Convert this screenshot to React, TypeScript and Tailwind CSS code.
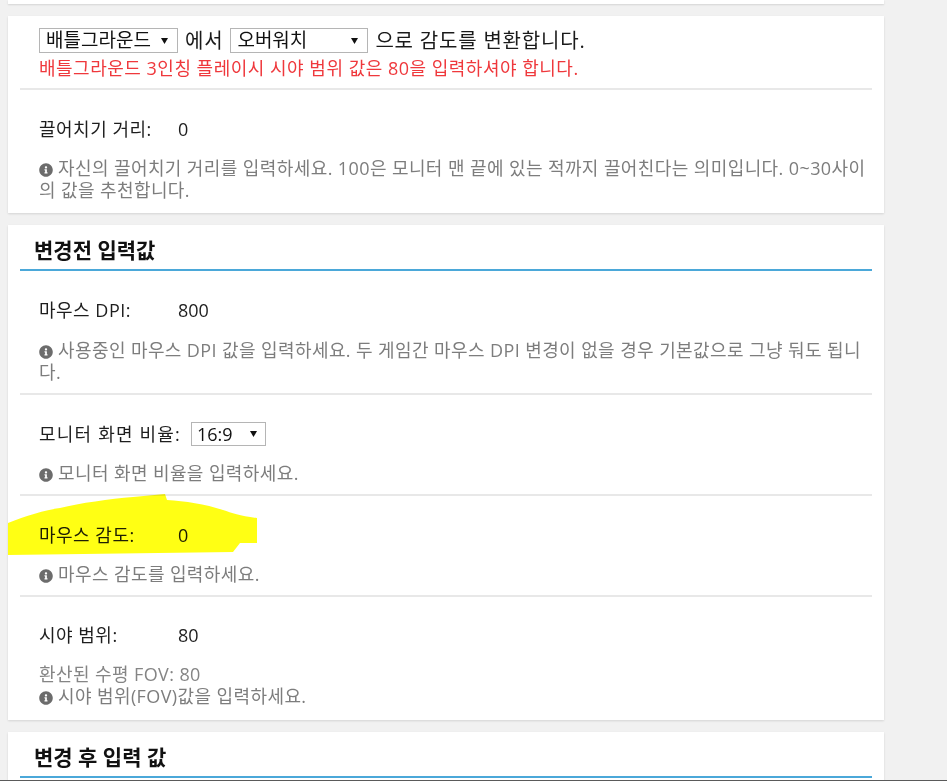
import React from "react";
import { FaInfoCircle } from "react-icons/fa";

function Arrow() {
  return (
    <svg width="7" height="6" viewBox="0 0 7 6" className="shrink-0">
      <path d="M0 0H7L3.5 6Z" fill="#111" />
    </svg>
  );
}

function Sel({ text, w }: { text: string; w: string }) {
  return (
    <div
      className={`flex h-[25px] items-center justify-between border border-[#b5b5b5] bg-white pl-[6px] pr-[9px] text-[19px] leading-none tracking-normal text-[#111] ${w}`}
    >
      <span>{text}</span>
      <Arrow />
    </div>
  );
}

function Help({ children }: { children: React.ReactNode }) {
  return (
    <p className="text-[18px] leading-[22px] tracking-[0.4px] text-[#7d7d7d]">
      <FaInfoCircle className="mr-[5px] inline-block align-[-2px] text-[#6c6c6c]" size={14} />
      {children}
    </p>
  );
}

function Label({ label, value }: { label: string; value: string }) {
  return (
    <div className="flex h-[26px] items-center text-[18px] text-[#1e1e1e]">
      <span className="min-w-[139px] tracking-[0.5px]">{label}</span>
      <span>{value}</span>
    </div>
  );
}

function Header({ children }: { children: React.ReactNode }) {
  return (
    <div className="border-b-2 border-[#4ba8d9] px-[14px] pb-[6px] pt-[12px] text-[21px] font-bold leading-[26px] text-[#111]">
      {children}
    </div>
  );
}

export default function App() {
  return (
    <div className="relative min-h-[781px] w-full overflow-hidden bg-[#f1f1f1] font-['Open_Sans','Noto_Sans_CJK_KR',sans-serif]">
      <div className="flex flex-col gap-[12px] pl-[8px]">
        {/* remnant of previous card */}
        <div className="h-[4px] w-[876px] bg-white shadow-[0_1px_2px_rgba(0,0,0,0.12)]" />

        {/* card 2 */}
        <div className="w-[876px] bg-white px-[12px] shadow-[0_1px_2px_rgba(0,0,0,0.12)]">
          <div className="border-b-2 border-[#e8e8e8] pb-[8px] pl-[19px] pt-[12px]">
            <div className="flex items-center gap-[7px] text-[20px] leading-[25px] tracking-[0.8px] text-[#1a1a1a]">
              <Sel text="배틀그라운드" w="w-[139px]" />
              <span>에서</span>
              <Sel text="오버워치" w="w-[138px]" />
              <span>으로 감도를 변환합니다.</span>
            </div>
            <p className="mt-[3px] text-[18px] leading-[24px] tracking-[0.5px] text-[#ef383c]">
              배틀그라운드 3인칭 플레이시 시야 범위 값은 80을 입력하셔야 합니다.
            </p>
          </div>
          <div className="pb-[12px] pl-[19px] pt-[26px]">
            <Label label="끌어치기 거리:" value="0" />
            <div className="mt-[15px]">
              <Help>
                자신의 끌어치기 거리를 입력하세요. 100은 모니터 맨 끝에 있는 적까지 끌어친다는 의미입니다. 0~30사이의 값을 추천합니다.
              </Help>
            </div>
          </div>
        </div>

        {/* card 3 */}
        <div className="w-[876px] bg-white px-[12px] shadow-[0_1px_2px_rgba(0,0,0,0.12)]">
          <Header>변경전 입력값</Header>
          <div className="border-b-2 border-[#e8e8e8] pb-[10px] pl-[19px] pt-[26px]">
            <Label label="마우스 DPI:" value="800" />
            <div className="mt-[16px]">
              <Help>
                사용중인 마우스 DPI 값을 입력하세요. 두 게임간 마우스 DPI 변경이 없을 경우 기본값으로 그냥 둬도 됩니다.
              </Help>
            </div>
          </div>
          <div className="border-b-2 border-[#e8e8e8] pb-[10px] pl-[19px] pt-[26px]">
            <div className="flex h-[26px] items-center text-[18px] text-[#1e1e1e]">
              <span className="min-w-[152px] tracking-[1.2px]">모니터 화면 비율:</span>
              <div className="flex h-[24px] w-[75px] items-center justify-between border border-[#b5b5b5] bg-white pl-[5px] pr-[8px] text-[18px] leading-none text-[#111]">
                <span>16:9</span>
                <Arrow />
              </div>
            </div>
            <div className="mt-[15px]">
              <Help>모니터 화면 비율을 입력하세요.</Help>
            </div>
          </div>
          <div className="border-b-2 border-[#e8e8e8] pb-[10px] pl-[19px] pt-[26px]">
            <Label label="마우스 감도:" value="0" />
            <div className="mt-[15px]">
              <Help>마우스 감도를 입력하세요.</Help>
            </div>
          </div>
          <div className="pb-[13px] pl-[19px] pt-[25px]">
            <Label label="시야 범위:" value="80" />
            <p className="mt-[15px] text-[18px] leading-[22px] tracking-[0.4px] text-[#858585]">
              환산된 수평 FOV: 80
            </p>
            <Help>시야 범위(FOV)값을 입력하세요.</Help>
          </div>
        </div>

        {/* card 4 */}
        <div className="h-[120px] w-[876px] bg-white px-[12px] shadow-[0_1px_2px_rgba(0,0,0,0.12)]">
          <Header>변경 후 입력 값</Header>
        </div>
      </div>

      {/* yellow highlighter annotation */}
      <svg
        className="pointer-events-none absolute left-0 top-0 mix-blend-multiply"
        width="947"
        height="781"
        viewBox="0 0 947 781"
      >
        <path
          d="M8,523 C25,516 45,510 60,508 C80,503 110,499 133,497 L165,494 L167,500 C185,501 205,504 223,510 C232,513 240,516 257,518 L257,543 L240,543 L233,552 L8,555 Z"
          fill="#ffff14"
        />
      </svg>

      {/* window bottom edge */}
      <div className="pointer-events-none absolute left-0 top-[780px] h-[1px] w-full bg-[#5a5a5a]" />
    </div>
  );
}
